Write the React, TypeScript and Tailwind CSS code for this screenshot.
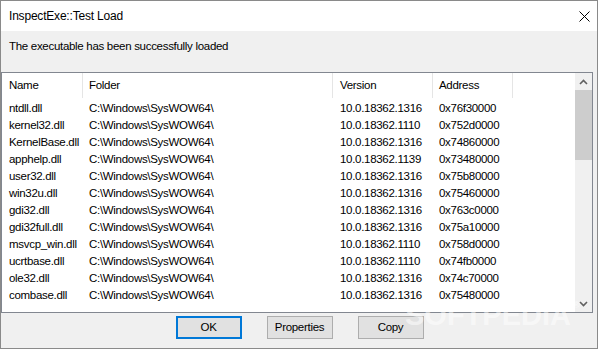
import React from 'react';

const rows = [
  ['ntdll.dll', '10.0.18362.1316', '0x76f30000'],
  ['kernel32.dll', '10.0.18362.1110', '0x752d0000'],
  ['KernelBase.dll', '10.0.18362.1316', '0x74860000'],
  ['apphelp.dll', '10.0.18362.1139', '0x73480000'],
  ['user32.dll', '10.0.18362.1316', '0x75b80000'],
  ['win32u.dll', '10.0.18362.1316', '0x75460000'],
  ['gdi32.dll', '10.0.18362.1316', '0x763c0000'],
  ['gdi32full.dll', '10.0.18362.1316', '0x75a10000'],
  ['msvcp_win.dll', '10.0.18362.1110', '0x758d0000'],
  ['ucrtbase.dll', '10.0.18362.1110', '0x74fb0000'],
  ['ole32.dll', '10.0.18362.1316', '0x74c70000'],
  ['combase.dll', '10.0.18362.1316', '0x75480000'],
];

function Chevron({ down }: { down?: boolean }) {
  return (
    <svg width="9" height="6" viewBox="0 0 9 6">
      <path
        d={down ? 'M1 1 L4.5 4.5 L8 1' : 'M1 5 L4.5 1.5 L8 5'}
        fill="none"
        stroke="#606060"
        strokeWidth="1.6"
      />
    </svg>
  );
}

export default function App() {
  return (
    <div className="relative w-[598px] h-[349px] overflow-hidden border border-[#8a8a8a] bg-[#f0f0f0] flex flex-col font-['Liberation_Sans',Arial,sans-serif] text-[11.5px] tracking-[-0.3px] text-black">
      {/* 제목 표시줄 */}
      <div className="h-[30px] bg-white flex items-center justify-between pl-[8px] pr-[7px] text-[12px] tracking-[-0.2px]">
        <span>InspectExe::Test Load</span>
        <svg width="11" height="11" viewBox="0 0 11 11">
          <path d="M0.5 0.5 L10.5 10.5 M10.5 0.5 L0.5 10.5" stroke="#000" strokeWidth="1" />
        </svg>
      </div>

      {/* 메시지 */}
      <div className="h-[41px] pl-[8px] pt-[7px] leading-[16px]">
        The executable has been successfully loaded
      </div>

      {/* 목록 */}
      <div className="w-[592px] h-[241px] border border-[#828790] bg-white flex">
        <div className="flex-1 flex flex-col">
          <div className="h-[25px] flex items-center">
            <div className="w-[81px] h-full pl-[7px] flex items-center border-r border-[#e5e5e5]">Name</div>
            <div className="w-[250px] h-full pl-[6px] flex items-center border-r border-[#e5e5e5]">Folder</div>
            <div className="w-[100px] h-full pl-[7px] flex items-center border-r border-[#e5e5e5]">Version</div>
            <div className="w-[80px] h-full pl-[6px] flex items-center border-r border-[#e5e5e5]">Address</div>
          </div>
          <div className="pt-[2px]">
            {rows.map(([name, ver, addr]) => (
              <div key={name} className="h-[17px] flex items-center leading-[17px]">
                <div className="w-[81px] pl-[7px]">{name}</div>
                <div className="w-[250px] pl-[6px]">C:\Windows\SysWOW64\</div>
                <div className="w-[100px] pl-[7px]">{ver}</div>
                <div className="w-[80px] pl-[6px]">{addr}</div>
              </div>
            ))}
          </div>
        </div>

        {/* 스크롤바 */}
        <div className="w-[17px] h-full bg-[#f0f0f0] flex flex-col">
          <div className="h-[17px] flex items-center justify-center">
            <Chevron />
          </div>
          <div className="h-[70px] bg-[#cdcdcd]" />
          <div className="flex-1" />
          <div className="h-[17px] flex items-center justify-center">
            <Chevron down />
          </div>
        </div>
      </div>

      {/* 버튼 */}
      <div className="flex justify-center gap-[25px] pt-[3px] pl-[1px]">
        <button className="w-[66px] h-[23px] bg-[#e1e1e1] border-2 border-[#0078d7]">OK</button>
        <button className="w-[66px] h-[23px] bg-[#e1e1e1] border border-[#adadad]">Properties</button>
        <button className="w-[66px] h-[23px] bg-[#e1e1e1] border border-[#adadad]">Copy</button>
      </div>

      {/* 워터마크 */}
      <div className="absolute left-[404px] top-[300px] flex items-start text-[29px] font-bold tracking-[0px] text-white/50 leading-none pointer-events-none">
        SOFTPEDIA<span className="text-[9px] ml-[2px]">®</span>
      </div>
    </div>
  );
}
